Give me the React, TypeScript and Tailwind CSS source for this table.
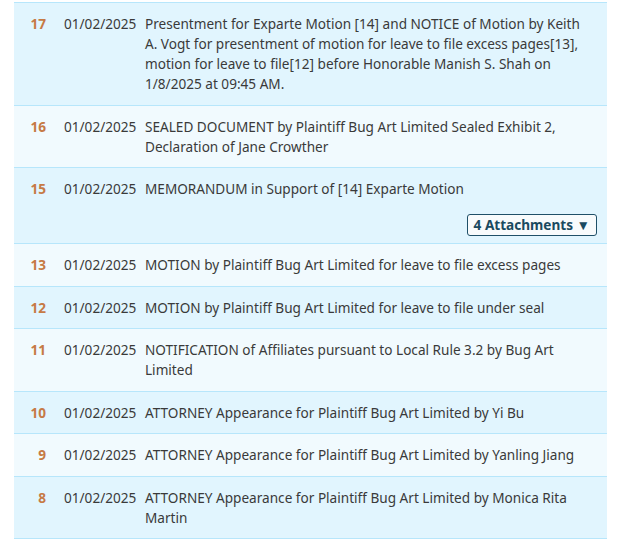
const ENTRIES = [
  { no: 17, date: '01/02/2025', text: 'Presentment for Exparte Motion [14] and NOTICE of Motion by Keith A. Vogt for presentment of motion for leave to file excess pages[13], motion for leave to file[12] before Honorable Manish S. Shah on 1/8/2025 at 09:45 AM.' },
  { no: 16, date: '01/02/2025', text: 'SEALED DOCUMENT by Plaintiff Bug Art Limited Sealed Exhibit 2, Declaration of Jane Crowther' },
  { no: 15, date: '01/02/2025', text: 'MEMORANDUM in Support of [14] Exparte Motion', attachments: 4 },
  { no: 13, date: '01/02/2025', text: 'MOTION by Plaintiff Bug Art Limited for leave to file excess pages' },
  { no: 12, date: '01/02/2025', text: 'MOTION by Plaintiff Bug Art Limited for leave to file under seal' },
  { no: 11, date: '01/02/2025', text: 'NOTIFICATION of Affiliates pursuant to Local Rule 3.2 by Bug Art Limited' },
  { no: 10, date: '01/02/2025', text: 'ATTORNEY Appearance for Plaintiff Bug Art Limited by Yi Bu' },
  { no: 9, date: '01/02/2025', text: 'ATTORNEY Appearance for Plaintiff Bug Art Limited by Yanling Jiang' },
  { no: 8, date: '01/02/2025', text: 'ATTORNEY Appearance for Plaintiff Bug Art Limited by Monica Rita Martin' },
]

export default function App() {
  return (
    <div className="min-h-screen bg-white pt-[2px] pl-[14px] pr-[19px] font-['Noto_Sans','Open_Sans',sans-serif] text-[13.6px] leading-[20px] text-[#3a3a3a]">
      <div className="border-t border-[#b7e6fb]">
        {ENTRIES.map((e, i) => (
          <div
            key={e.no}
            className={`border-b border-[#b7e6fb] ${i % 2 === 0 ? 'bg-[#e1f5fe]' : 'bg-[#f1fafe]'} pt-[11px] pb-[10.5px] pr-[10px]`}
          >
            <div className="flex">
              <div className="w-[32px] shrink-0 text-right font-bold text-[#c67a45]">{e.no}</div>
              <div className="w-[99px] shrink-0 pl-[18px]">{e.date}</div>
              <div className="flex-1 pr-[8px]">{e.text}</div>
            </div>
            {e.attachments && (
              <div className="mt-[15px] mb-[-3.5px] flex justify-end">
                <button className="rounded-[3px] border border-[#1f5068] bg-[#f8fbfc] px-[6px] py-[1px] text-[13.6px] font-bold leading-[18px] text-[#1a4a60]">
                  {e.attachments} Attachments ▼
                </button>
              </div>
            )}
          </div>
        ))}
      </div>
    </div>
  )
}
